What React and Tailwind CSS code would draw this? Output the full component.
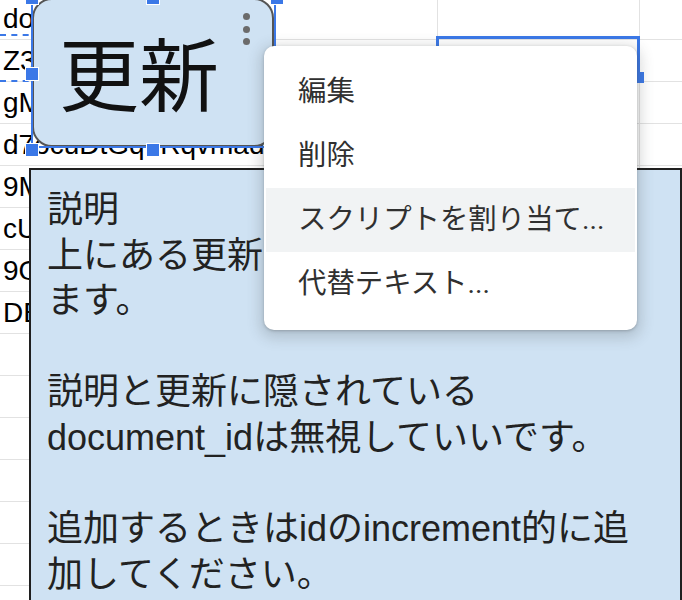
import React from 'react';

const rows = [
  'doKq8ZbW2xTn',
  'Z3hPvL0mYcRa',
  'gMx4TqWd9sEe',
  'd7ocuDtGqLRqvmad',
  '9MbRk2LpQz7w',
  'cUe8VnJ3yXo1',
  '9OtZ5wMhKd2f',
  'DEq7pLs0NbVr',
  '', '', '', '', '', '', '',
];

const menuItems = ['編集', '削除', 'スクリプトを割り当て...', '代替テキスト...'];

const noteLines = [
  '説明',
  '上にある更新ボタンを押すと更新し',
  'ます。',
  '',
  '説明と更新に隠されている',
  'document_idは無視していいです。',
  '',
  '追加するときはidのincrement的に追',
  '加してください。',
];

const Handle = ({ className }) => (
  <div className={`absolute w-[14px] h-[14px] bg-[#3b78e7] border border-white ${className}`} />
);

const App = () => {
  return (
    <div className="relative w-[682px] h-[600px] overflow-hidden bg-white text-black font-['Liberation_Sans','Noto_Sans_CJK_JP',sans-serif]">
      {/* sheet grid */}
      <div className="-mt-[2px]">
        {rows.map((text, i) => (
          <div key={i} className="flex h-[42px] border-b border-[#e2e2e2]">
            <div className="w-[438px] shrink-0 border-r border-[#e2e2e2] pl-[3px] text-[28px] leading-[41px] whitespace-nowrap overflow-hidden">
              {text}
            </div>
            <div className="w-[202px] shrink-0 border-r border-[#e2e2e2]" />
            <div className="flex-1" />
          </div>
        ))}
      </div>

      {/* copy marquee */}
      <div className="absolute left-0 top-[34px] w-[40px] h-[48px] border-y-2 border-dashed border-[#3b78e7]" />

      {/* active cell */}
      <div className="absolute left-[436px] top-[36px] w-[204px] h-[46px] border-[3px] border-[#3b78e7]" />
      <div className="absolute left-[633px] top-[72px] w-[11px] h-[11px] bg-[#3b78e7]" />

      {/* note text box */}
      <div className="absolute left-[29px] top-[168px] w-[653px] h-[460px] border-2 border-[#1f1f1f] bg-[#cfe2f3] pl-[16px] pt-[17px] text-[36px] leading-[45.6px] text-[#222]">
        {noteLines.map((line, i) => (
          <div key={i} className="h-[45.6px] whitespace-nowrap">{line}</div>
        ))}
      </div>

      {/* update button drawing */}
      <div className="absolute left-[32px] top-[-2px] w-[242px] h-[149px] rounded-[20px] border-2 border-[#555] bg-[#cfe2f3] flex items-center pl-[25px] pb-[5px]">
        <span className="text-[80px] leading-none text-[#111] font-['Noto_Sans_CJK_JP',sans-serif]">更新</span>
        <div className="absolute right-[22px] top-[13px] flex flex-col gap-[5.5px]">
          <span className="w-[7px] h-[7px] rounded-full bg-[#6b6b6b]" />
          <span className="w-[7px] h-[7px] rounded-full bg-[#6b6b6b]" />
          <span className="w-[7px] h-[7px] rounded-full bg-[#6b6b6b]" />
        </div>
      </div>

      {/* selection frame + handles */}
      <div className="absolute left-[31px] top-[-2px] w-[245px] h-[150px] border-2 border-[#3b78e7]" />
      <Handle className="left-[25px] top-[-9px]" />
      <Handle className="left-[146px] top-[-9px]" />
      <Handle className="left-[270px] top-[-9px]" />
      <Handle className="left-[25px] top-[67px]" />
      <Handle className="left-[25px] top-[143px]" />
      <Handle className="left-[146px] top-[143px]" />

      {/* context menu */}
      <div className="absolute left-[264px] top-[46px] w-[373px] h-[284px] rounded-[10px] bg-white py-[14px] shadow-[0_4px_14px_4px_rgba(60,64,67,0.2),0_1px_3px_rgba(60,64,67,0.3)] font-['Roboto','Noto_Sans_CJK_JP',sans-serif]">
        {menuItems.map((item, i) => (
          <div
            key={item}
            className={`mx-[2px] h-[64px] flex items-center pl-[32px] text-[28.4px] text-[#303030] ${i === 2 ? 'bg-[#f1f3f4]' : ''}`}
          >
            {item}
          </div>
        ))}
      </div>
    </div>
  );
};

export default App;
